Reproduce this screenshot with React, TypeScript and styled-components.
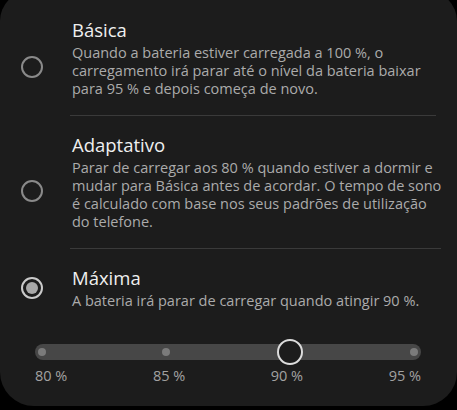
import React from "react";
import styled, { createGlobalStyle } from "styled-components";

const Global = createGlobalStyle`
  html, body { margin: 0; padding: 0; background: #000; }
  body { width: 457px; height: 410px; overflow: hidden; font-family: "Open Sans", Roboto, sans-serif; }
`;

const Card = styled.div`
  box-sizing: border-box;
  width: 457px;
  height: 415px;
  margin-top: -9px;
  padding: 10px 21px 0 21px;
  background: #1c1c1c;
  border-radius: 30px 30px 34px 34px;
  display: flex;
  flex-direction: column;
`;

const Row = styled.div<{ $last?: boolean }>`
  display: flex;
  align-items: center;
  gap: 27px;
  padding: 17px 0 ${(p) => (p.$last ? "17px" : "0")} 0;
`;

const RadioOuter = styled.div<{ $on?: boolean }>`
  box-sizing: border-box;
  flex: none;
  width: 22px;
  height: 22px;
  border-radius: 50%;
  border: 2px solid ${(p) => (p.$on ? "#cacaca" : "#8a8a8a")};
  display: flex;
  align-items: center;
  justify-content: center;
`;

const RadioDot = styled.div`
  width: 12px;
  height: 12px;
  border-radius: 50%;
  background: #a8a8a8;
`;

const Content = styled.div<{ $last?: boolean }>`
  flex: 1;
  display: flex;
  flex-direction: column;
  padding-bottom: ${(p) => (p.$last ? "0" : "17px")};
  border-bottom: ${(p) => (p.$last ? "none" : "1px solid #3a3a3a")};
  align-self: stretch;
  justify-content: flex-start;
`;

const Title = styled.div`
  font-size: 18.5px;
  line-height: 24px;
  color: #efefef;
  margin-bottom: 2px;
  padding-left: 2px;
`;

const Desc = styled.div`
  font-size: 14.5px;
  line-height: 18px;
  color: #ababab;
  white-space: nowrap;
  padding-left: 2px;
`;

const SliderWrap = styled.div`
  margin: 17px 15px 0 14px;
  display: flex;
  flex-direction: column;
  gap: 6px;
`;

const Track = styled.div`
  position: relative;
  height: 16px;
  border-radius: 8px;
  background: #474747;
`;

const Tick = styled.div`
  position: absolute;
  top: 4px;
  width: 8px;
  height: 8px;
  margin-left: -4px;
  border-radius: 50%;
  background: #7b7b7b;
`;

const Thumb = styled.div`
  position: absolute;
  top: -5px;
  box-sizing: border-box;
  width: 26px;
  height: 26px;
  margin-left: -13px;
  border-radius: 50%;
  border: 2.5px solid #dcdcdc;
  background: #1c1c1c;
`;

const Labels = styled.div`
  display: flex;
  justify-content: space-between;
  font-size: 14.5px;
  line-height: 20px;
  color: #a2a2a2;
`;

const options = [
  {
    title: "Básica",
    lines: [
      "Quando a bateria estiver carregada a 100 %, o",
      "carregamento irá parar até o nível da bateria baixar",
      "para 95 % e depois começa de novo.",
    ],
  },
  {
    title: "Adaptativo",
    lines: [
      "Parar de carregar aos 80 % quando estiver a dormir e",
      "mudar para Básica antes de acordar. O tempo de sono",
      "é calculado com base nos seus padrões de utilização",
      "do telefone.",
    ],
  },
  {
    title: "Máxima",
    lines: ["A bateria irá parar de carregar quando atingir 90 %."],
  },
];

const ticks = [0, 1, 3];

export default function App() {
  return (
    <>
      <Global />
      <Card>
        {options.map((o, i) => {
          const last = i === options.length - 1;
          return (
            <Row key={o.title} $last={last}>
              <RadioOuter $on={last}>{last && <RadioDot />}</RadioOuter>
              <Content $last={last}>
                <Title>{o.title}</Title>
                <Desc>
                  {o.lines.map((l, j) => (
                    <div key={j}>{l}</div>
                  ))}
                </Desc>
              </Content>
            </Row>
          );
        })}
        <SliderWrap>
          <Track>
            {ticks.map((t) => (
              <Tick key={t} style={{ left: 7 + t * 124 }} />
            ))}
            <Thumb style={{ left: 7 + 2 * 124 }} />
          </Track>
          <Labels>
            <span>80 %</span>
            <span>85 %</span>
            <span>90 %</span>
            <span>95 %</span>
          </Labels>
        </SliderWrap>
      </Card>
    </>
  );
}
